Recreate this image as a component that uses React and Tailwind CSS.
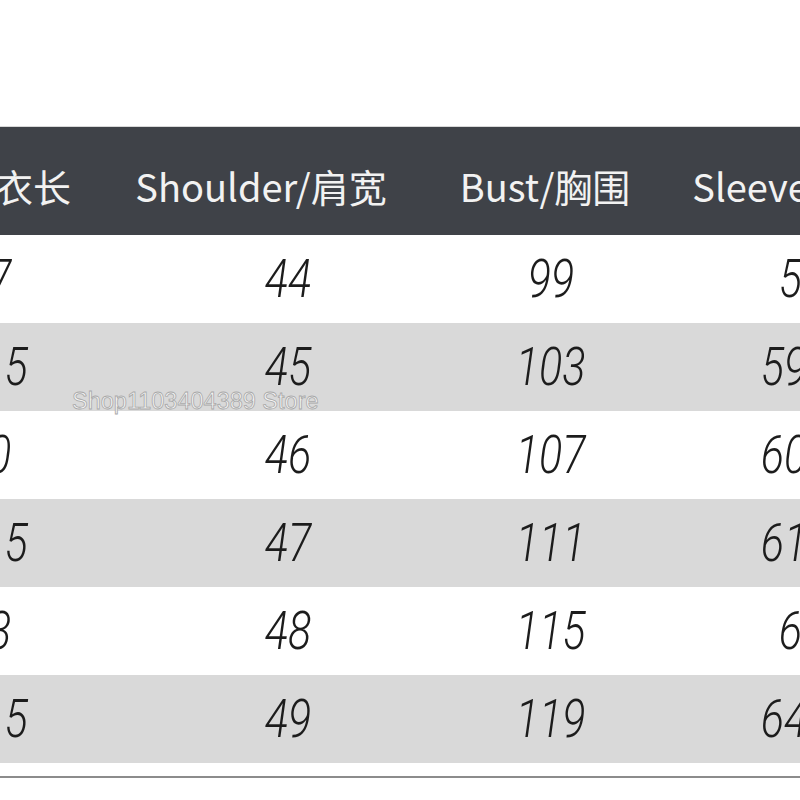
export default function App() {
  const rows = [
    ["67", "44", "99", "58"],
    ["68.5", "45", "103", "59"],
    ["70", "46", "107", "60"],
    ["71.5", "47", "111", "61"],
    ["73", "48", "115", "62"],
    ["74.5", "49", "119", "64"],
  ];
  const headers = ["Length/衣长", "Shoulder/肩宽", "Bust/胸围", "Sleeve/袖长"];
  return (
    <div className="relative w-[800px] h-[800px] overflow-hidden bg-white">
      <div className="h-[127px] border-b border-[#d8d8d8]" />
      <div className="w-[1100px] -ml-[180px]">
        <div
          className="grid grid-cols-[288px_306px_262px_240px] h-[108px] bg-[#3f4248] items-center pt-[10px] text-[#f2f2f2] text-[38px] leading-none"
          style={{ fontFamily: '"Noto Sans CJK SC", "Noto Sans", sans-serif' }}
        >
          {headers.map((h) => (
            <div key={h} className="text-center whitespace-nowrap">{h}</div>
          ))}
        </div>
        {rows.map((r, i) => (
          <div
            key={i}
            className={`grid grid-cols-[336px_264px_262px_204px] h-[88px] items-center ${i % 2 === 1 ? "bg-[#d9d9d9]" : "bg-white"}`}
          >
            {r.map((c, j) => (
              <div
                key={j}
                className={`text-center ${j === 3 && (i === 0 || i === 4) ? "pl-[36px]" : ""}`}
              >
                <span
                  className="inline-block scale-x-[0.8] italic font-light text-[54px] leading-none text-[#1c1c1c]"
                  style={{ fontFamily: 'Roboto, "Liberation Sans", sans-serif' }}
                >
                  {c}
                </span>
              </div>
            ))}
          </div>
        ))}
      </div>
      <div className="h-[13px]" />
      <div className="h-[2px] bg-[#8c8c8c]" />
      <div
        className="absolute left-[72px] top-[390px] text-[23.5px] leading-none whitespace-nowrap text-[#f4f4f4] [-webkit-text-stroke:0.8px_#a8a8a8]"
        style={{ fontFamily: '"Liberation Sans", Arial, sans-serif' }}
      >
        Shop1103404389 Store
      </div>
    </div>
  );
}
